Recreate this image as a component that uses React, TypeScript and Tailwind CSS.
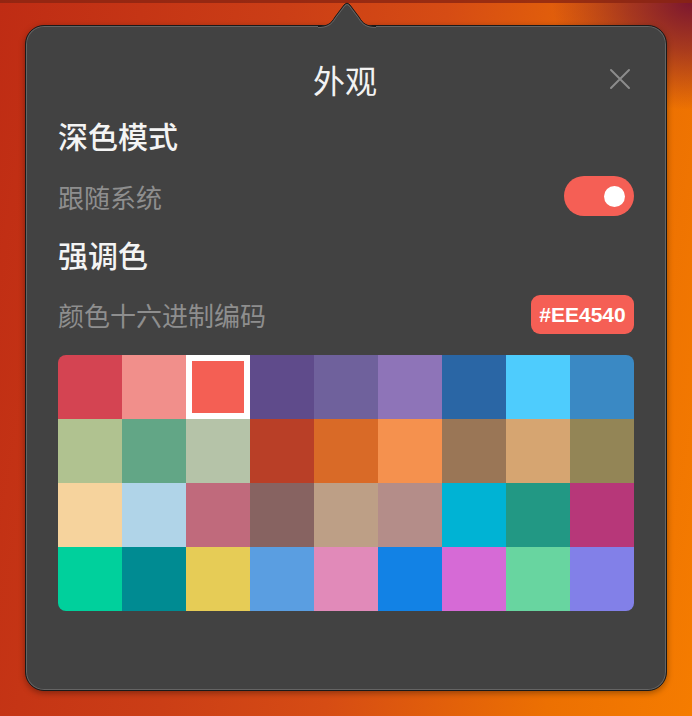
import React from "react";

const colors: string[][] = [
  ["#D44452", "#F18F8B", "#F45F54", "#5F4B8B", "#6F619C", "#8E74B8", "#2A66A5", "#4ECCFD", "#3A89C4"],
  ["#B0C290", "#62A686", "#B5C3A8", "#B93F27", "#D96A27", "#F5914E", "#9A7656", "#D6A571", "#938556"],
  ["#F6D39D", "#B0D4E8", "#C06A7C", "#876361", "#BD9F86", "#B48D89", "#00B3D4", "#229884", "#B73779"],
  ["#00D09C", "#008B92", "#E6CC56", "#5A9EE1", "#E18AB9", "#1282E5", "#D66AD6", "#68D5A0", "#8280E8"],
];

const font = { fontFamily: '"PingFang SC", "Noto Sans CJK SC", "Noto Sans", sans-serif' };

export default function App() {
  return (
    <div
      className="w-[692px] h-[716px] overflow-hidden relative"
      style={{
        background:
          "radial-gradient(ellipse 140px 110px at 100% 0%, #7a1530 0%, rgba(122,21,48,0.6) 45%, rgba(122,21,48,0) 100%), linear-gradient(100deg, #bf2c14 0%, #cb3e16 35%, #d64c14 55%, #ec7002 82%, #f57c00 100%)",
        ...font,
      }}
    >
      <div className="h-[3px] bg-[#8a2412]/80" />
      <div className="pt-[22px] pl-[25px]">
        <div className="relative w-[642px] h-[666px] rounded-[19px] border border-[#1a1a1a] bg-[#424242] shadow-[inset_0_0_0_1px_rgba(255,255,255,0.18),0_2px_6px_rgba(0,0,0,0.35)]">
          <svg
            className="absolute left-[292px] top-[-24px]"
            width="58"
            height="27"
            viewBox="0 0 58 27"
          >
            <path
              d="M0 24 C9 24 13 22 17 15 L26 3 Q29 -0.5 32 3 L41 15 C45 22 49 24 58 24 L58 27 L0 27 Z"
              fill="#424242"
            />
            <path
              d="M0 24.5 C9 24.5 13 22 17 15 L26 3 Q29 -0.5 32 3 L41 15 C45 22 49 24.5 58 24.5"
              fill="none"
              stroke="#1a1a1a"
              strokeWidth="1"
            />
            <path
              d="M0 25.5 C9 25.5 13.5 23 17.8 15.6 L26.8 3.8 Q29 1 31.2 3.8 L40.2 15.6 C44.5 23 49 25.5 58 25.5"
              fill="none"
              stroke="rgba(255,255,255,0.18)"
              strokeWidth="1"
            />
          </svg>

          <div className="flex flex-col px-[32px] pt-[28px]">
            <div className="relative flex items-center justify-center h-[50px]">
              <span className="text-[32px] leading-none text-[#f2f2f2] ml-[-2px]">外观</span>
              <button className="absolute right-[3px] top-[14px] w-[22px] h-[22px] flex items-center justify-center">
                <svg width="22" height="22" viewBox="0 0 22 22">
                  <path d="M2 2 L20 20 M20 2 L2 20" stroke="#8c8c8c" strokeWidth="2" strokeLinecap="round" />
                </svg>
              </button>
            </div>

            <div className="mt-[11px] text-[30px] leading-[40px] text-[#f4f4f4] font-medium">深色模式</div>

            <div className="mt-[21px] flex items-center justify-between h-[40px]">
              <span className="text-[26px] text-[#8e8e8e]">跟随系统</span>
              <div className="w-[70px] h-[40px] rounded-full bg-[#F55F55] flex items-center justify-end pr-[9px]">
                <div className="w-[21px] h-[21px] rounded-full bg-white" />
              </div>
            </div>

            <div className="mt-[18px] text-[30px] leading-[40px] text-[#f4f4f4] font-medium">强调色</div>

            <div className="mt-[21px] flex items-center justify-between h-[39px]">
              <span className="text-[26px] text-[#8e8e8e]">颜色十六进制编码</span>
              <div
                className="h-[39px] w-[103px] rounded-[9px] bg-[#F55F55] flex items-center justify-center text-white text-[21px] font-bold"
                style={{ fontFamily: '"Liberation Sans", Arial, sans-serif' }}
              >
                #EE4540
              </div>
            </div>

            <div className="mt-[21px] rounded-[8px] overflow-hidden grid grid-cols-9 w-[576px]">
              {colors.flatMap((row, r) =>
                row.map((c, i) => {
                  const selected = r === 0 && i === 2;
                  return (
                    <div
                      key={`${r}-${i}`}
                      className={selected ? "h-[64px] border-[6px] border-white" : "h-[64px]"}
                      style={{ backgroundColor: c }}
                    />
                  );
                })
              )}
            </div>
          </div>
        </div>
      </div>
    </div>
  );
}
